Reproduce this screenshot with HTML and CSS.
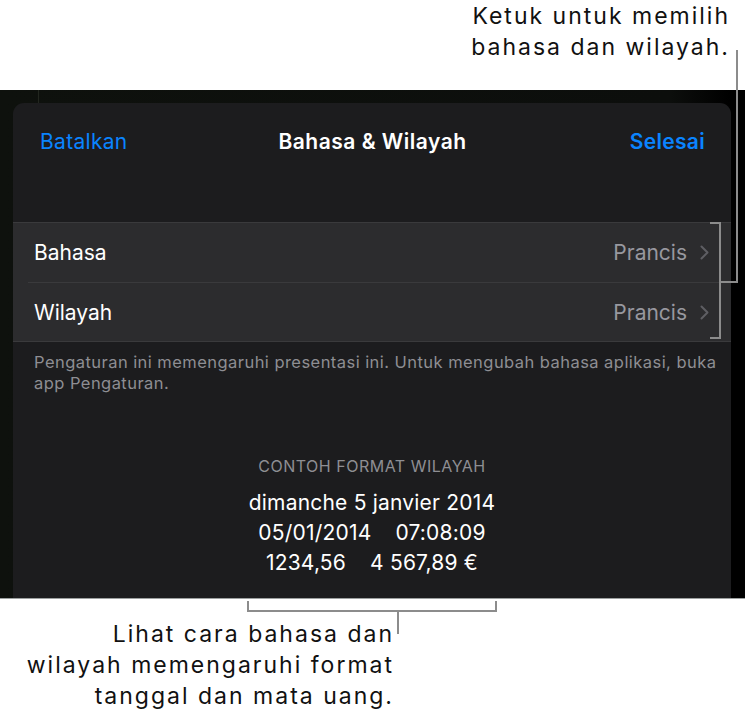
FILE: index.html
```html
<!DOCTYPE html>
<html lang="id">
<head>
<meta charset="utf-8">
<title>Bahasa &amp; Wilayah</title>
<link rel="stylesheet" href="styles.css">
</head>
<body>
<div class="page">
  <div class="callout-top">
    <p>Ketuk untuk memilih<br>bahasa dan wilayah.</p>
  </div>

  <div class="screen">
    <div class="edge-line"></div>
    <div class="sheet">
      <div class="navbar">
        <span class="nav-btn">Batalkan</span>
        <span class="nav-title">Bahasa &amp; Wilayah</span>
        <span class="nav-btn done">Selesai</span>
      </div>

      <div class="group">
        <div class="row">
          <span class="row-label">Bahasa</span>
          <span class="row-value">Prancis
            <svg class="chev" width="9" height="15" viewBox="0 0 9 15"><path d="M1.5 1.5 L7.5 7.5 L1.5 13.5" fill="none" stroke="currentColor" stroke-width="2" stroke-linecap="round" stroke-linejoin="round"/></svg>
          </span>
        </div>
        <div class="row">
          <span class="row-label">Wilayah</span>
          <span class="row-value">Prancis
            <svg class="chev" width="9" height="15" viewBox="0 0 9 15"><path d="M1.5 1.5 L7.5 7.5 L1.5 13.5" fill="none" stroke="currentColor" stroke-width="2" stroke-linecap="round" stroke-linejoin="round"/></svg>
          </span>
        </div>
      </div>

      <p class="footnote">Pengaturan ini memengaruhi presentasi ini. Untuk mengubah bahasa aplikasi, buka app Pengaturan.</p>

      <div class="sample">
        <div class="sample-head">CONTOH FORMAT WILAYAH</div>
        <div class="sample-line">dimanche 5 janvier 2014</div>
        <div class="sample-line">05/01/2014<span class="gap"></span>07:08:09</div>
        <div class="sample-line">1234,56<span class="gap"></span>4 567,89 €</div>
      </div>
    </div>
  </div>

  <div class="callout-bottom">
    <p>Lihat cara bahasa dan<br>wilayah memengaruhi format<br>tanggal dan mata uang.</p>
  </div>

  <svg class="leaders" width="745" height="726" viewBox="0 0 745 726">
    <g fill="none" stroke="#8c8c8c" stroke-width="2">
      <path d="M737 50 V282 H720"/>
      <path d="M710 223 H720 V338 H710"/>
      <path d="M248 601 V611 H496 V601"/>
      <path d="M398 611 V634"/>
    </g>
  </svg>
</div>
</body>
</html>
```

FILE: styles.css
```css
* { box-sizing: border-box; }

html, body {
  margin: 0;
  padding: 0;
  background: #ffffff;
}

body {
  font-family: "Inter", "Noto Sans", sans-serif;
  width: 745px;
  height: 726px;
  overflow: hidden;
}

.page {
  position: relative;
  width: 745px;
  height: 726px;
}

.callout-top {
  height: 90px;
  display: flex;
  justify-content: flex-end;
  padding: 1px 15px 0 0;
}

.callout-top p,
.callout-bottom p {
  margin: 0;
  text-align: right;
  font-size: 23px;
  line-height: 31px;
  letter-spacing: 2px;
  color: #111111;
}

.screen {
  position: relative;
  height: 509px;
  background: linear-gradient(90deg, #0e110d 0%, #0c0e0c 90%, #000000 98%);
  border-bottom: 1px solid #9ca0a0;
  padding: 13px 14px 0 13px;
  display: flex;
}

.edge-line {
  position: absolute;
  left: 38px;
  top: 0;
  width: 1px;
  height: 13px;
  background: #22261f;
}

.sheet {
  flex: 1;
  background: #1c1c1e;
  border-radius: 11px 11px 0 0;
  display: flex;
  flex-direction: column;
}

.navbar {
  height: 76px;
  display: grid;
  grid-template-columns: 1fr auto 1fr;
  align-items: center;
  padding: 0 26px 0 27px;
  font-size: 21px;
  letter-spacing: 0.3px;
}

.nav-btn {
  color: #0a84ff;
  justify-self: start;
}

.nav-btn.done {
  font-weight: 600;
  justify-self: end;
}

.nav-title {
  color: #ffffff;
  font-weight: 600;
  letter-spacing: 0.5px;
}

.group {
  margin-top: 43px;
  background: #2c2c2e;
  border-top: 1px solid #3a3a3c;
  border-bottom: 1px solid #3a3a3c;
}

.row {
  height: 59px;
  display: flex;
  align-items: center;
  justify-content: space-between;
  padding: 0 22px 0 21px;
  font-size: 21px;
  color: #ffffff;
}

.row + .row {
  border-top: 1px solid #3a3a3c;
  margin-left: 15px;
  padding-left: 6px;
}

.row-value {
  color: #98989f;
  display: flex;
  align-items: center;
  gap: 13px;
}

.chev {
  color: #5e5e63;
}

.footnote {
  margin: 10px 0 0 0;
  padding: 0 14px 0 21px;
  font-size: 16.5px;
  line-height: 21px;
  letter-spacing: 0.45px;
  color: #8e8e93;
}

.sample {
  margin-top: 62px;
  display: flex;
  flex-direction: column;
  align-items: center;
}

.sample-head {
  font-size: 16px;
  line-height: 20px;
  letter-spacing: 0.5px;
  color: #8e8e93;
  margin-bottom: 12px;
}

.sample-line {
  font-size: 21px;
  line-height: 30px;
  letter-spacing: 0.2px;
  color: #ffffff;
}

.gap {
  display: inline-block;
  width: 24px;
}

.callout-bottom {
  display: flex;
  justify-content: flex-end;
  padding: 20px 0 0 0;
  width: 394px;
}

.leaders {
  position: absolute;
  left: 0;
  top: 0;
  pointer-events: none;
}
```
